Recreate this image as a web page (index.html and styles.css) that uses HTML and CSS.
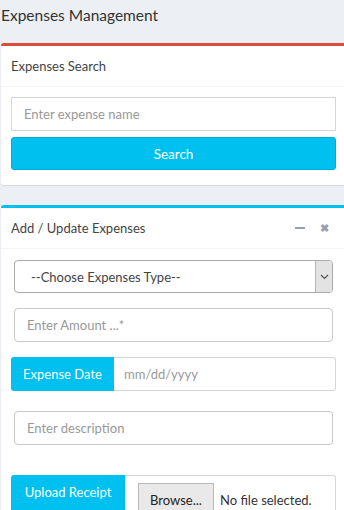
FILE: index.html
```html
<!DOCTYPE html>
<html lang="en">
<head>
    <meta charset="UTF-8">
    <meta name="viewport" content="width=device-width, initial-scale=1.0">
    <title>Expenses Management</title>
    <link rel="stylesheet" href="styles.css">
</head>
<body>
    <div class="content-header">
        <h1>Expenses Management</h1>
    </div>

    <div class="box box-danger">
        <div class="box-header">
            <h3 class="box-title">Expenses Search</h3>
        </div>
        <div class="box-body">
            <input type="text" class="form-control" placeholder="Enter expense name">
            <button class="btn-info btn-block">Search</button>
        </div>
    </div>

    <div class="box box-info">
        <div class="box-header">
            <h3 class="box-title">Add / Update Expenses</h3>
            <div class="box-tools">
                <span class="tool-minus"></span>
                <span class="tool-close">&#10006;</span>
            </div>
        </div>
        <div class="box-body">
            <div class="form-group inset first">
                <div class="select-wrap">
                    <select class="form-control select">
                        <option>--Choose Expenses Type--</option>
                    </select>
                    <span class="select-arrow">
                        <svg width="9" height="6" viewBox="0 0 9 6"><path d="M1 1 L4.5 4.5 L8 1" fill="none" stroke="#555" stroke-width="1.2"/></svg>
                    </span>
                </div>
            </div>
            <div class="form-group inset">
                <input type="text" class="form-control rounded" placeholder="Enter Amount ...*">
            </div>
            <div class="form-group">
                <div class="input-group">
                    <span class="input-group-addon">Expense Date</span>
                    <input type="text" class="form-control date" placeholder="mm/dd/yyyy">
                </div>
            </div>
            <div class="form-group inset desc">
                <input type="text" class="form-control rounded" placeholder="Enter description">
            </div>
            <div class="form-group upload">
                <div class="input-group">
                    <span class="input-group-addon wide">Upload Receipt</span>
                    <div class="file-field">
                        <span class="browse">Browse...</span>
                        <span class="file-name">No file selected.</span>
                    </div>
                </div>
            </div>
        </div>
    </div>
</body>
</html>
```

FILE: styles.css
```css
html, body {
    margin: 0;
    padding: 0;
    height: 100%;
    overflow: hidden;
}
body {
    background-color: #ecf0f5;
    font-family: "Source Sans Pro", Lato, "Liberation Sans", sans-serif;
    color: #333;
    font-size: 14px;
}
.content-header {
    padding: 4px 1px 0;
    height: 39px;
}
.content-header h1 {
    margin: 0;
    font-size: 15.5px;
    font-weight: normal;
    line-height: 22px;
}
.box {
    background: #fff;
    margin: 0 0 20px 1px;
    width: 345px;
    border-top: 3px solid #d2d6de;
    border-radius: 3px;
    box-shadow: 0 1px 1px rgba(0, 0, 0, 0.1);
}
.box-danger {
    border-top-color: #dd4b39;
}
.box-info {
    border-top-color: #00c0ef;
}
.box-header {
    display: flex;
    align-items: center;
    justify-content: space-between;
    height: 40px;
    padding: 0 10px;
    border-bottom: 1px solid #f4f4f4;
}
.box-title {
    margin: 0;
    font-size: 13px;
    font-weight: normal;
    color: #444;
}
.box-tools {
    display: flex;
    align-items: center;
    gap: 15px;
    padding-right: 7px;
}
.tool-minus {
    width: 10px;
    height: 2px;
    background: #97a0b3;
}
.tool-close {
    font-size: 11px;
    font-weight: bold;
    color: #97a0b3;
}
.box-body {
    padding: 10px;
}
.form-control {
    display: block;
    box-sizing: border-box;
    width: 100%;
    height: 34px;
    padding: 6px 12px;
    font-family: inherit;
    font-size: 13px;
    color: #555;
    background: #fff;
    border: 1px solid #d2d6de;
    border-radius: 0;
    outline: none;
}
.form-control::placeholder {
    color: #999;
}
.btn-info {
    background: #00c0ef;
    color: #fff;
    border: 1px solid #00acd6;
    border-radius: 3px;
    font-family: inherit;
    font-size: 13.5px;
}
.btn-block {
    display: block;
    width: 100%;
    height: 33px;
    margin-top: 6px;
    margin-bottom: 5px;
}
.form-group {
    margin: 2px 0 15px;
}
.first {
    margin-top: 1px;
}
.inset {
    margin-left: 3px;
    margin-right: 3px;
}
.desc {
    margin-top: 20px;
    margin-bottom: 30px;
}
.rounded {
    border-radius: 4px;
    border-color: #c9c9c9;
}
.select-wrap {
    position: relative;
}
.select {
    appearance: none;
    -webkit-appearance: none;
    height: 33px;
    border-radius: 4px;
    border-color: #aaa;
    color: #444;
    padding-left: 16px;
}
.select-arrow {
    position: absolute;
    top: 1px;
    right: 1px;
    bottom: 1px;
    width: 16px;
    display: flex;
    align-items: center;
    justify-content: center;
    background: #e3e3e3;
    border-left: 1px solid #b5b5b5;
    border-radius: 0 3px 3px 0;
}
.input-group {
    display: flex;
}
.input-group-addon {
    display: flex;
    align-items: center;
    justify-content: center;
    width: 103px;
    height: 34px;
    box-sizing: border-box;
    background: #00c0ef;
    color: #fff;
    font-size: 13px;
    border-radius: 3px 0 0 3px;
    flex-shrink: 0;
}
.input-group-addon.wide {
    width: 114px;
    height: 37px;
    align-items: flex-start;
    padding-top: 9px;
}
.date {
    border-radius: 0 3px 3px 0;
    border-left: 0;
    padding-left: 10px;
}
.file-field {
    flex: 1;
    height: 37px;
    box-sizing: border-box;
    border: 1px solid #d2d6de;
    border-left: 0;
    border-bottom: 0;
    border-radius: 0 3px 0 0;
    display: flex;
    align-items: flex-start;
    padding: 7px 0 0 13px;
    gap: 6px;
}
.browse {
    box-sizing: border-box;
    width: 76px;
    height: 30px;
    background: #e9e9e9;
    border: 1px solid #b9b9b9;
    color: #222;
    font-size: 13px;
    display: flex;
    align-items: center;
    justify-content: center;
    padding-top: 4px;
}
.file-name {
    color: #333;
    font-size: 13px;
    padding-top: 9px;
}
```
